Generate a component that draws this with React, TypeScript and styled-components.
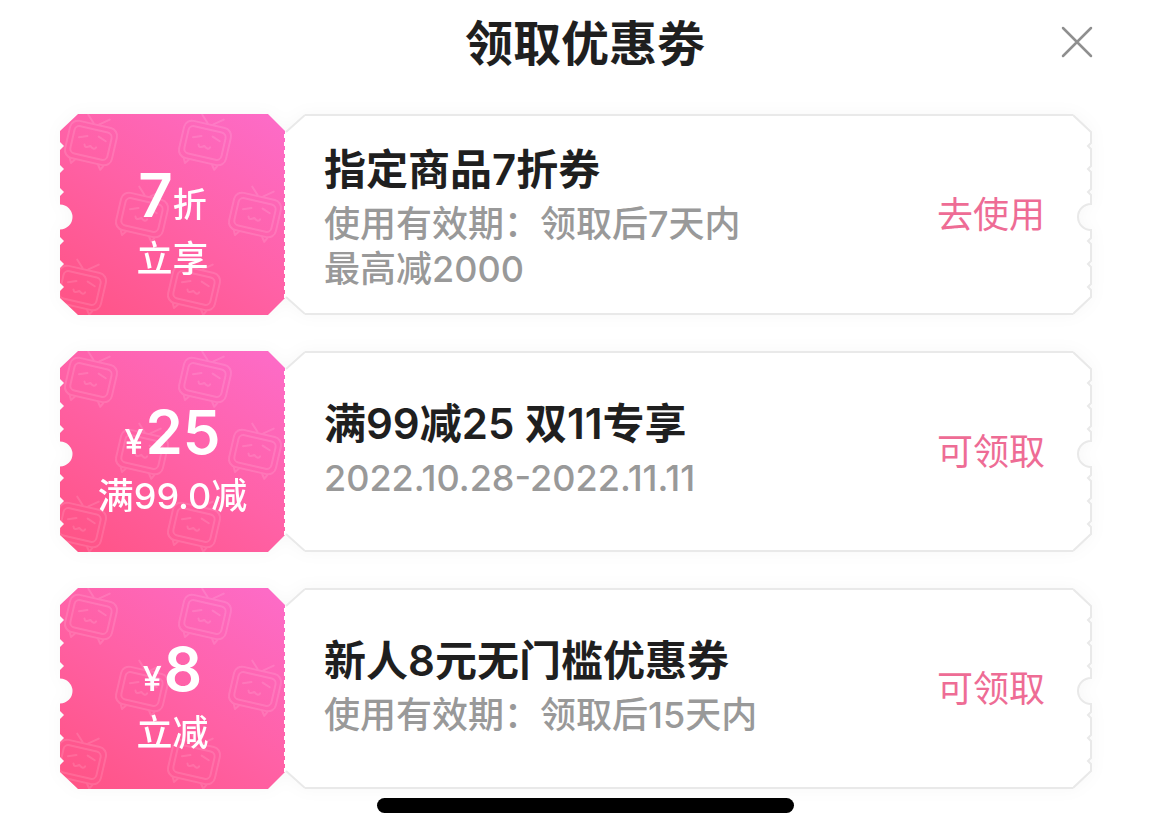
import React from "react";
import styled, { createGlobalStyle } from "styled-components";

const GlobalStyle = createGlobalStyle`
  *, *::before, *::after { box-sizing: border-box; }
  body {
    margin: 0;
    background: #fff;
    color: #1f1f1f;
    font-family: Inter, "Noto Sans CJK SC", sans-serif;
  }
`;

const Sheet = styled.main`
  display: flex;
  flex-direction: column;
  padding: 0 60px 24px;
`;

const Header = styled.header`
  display: grid;
  grid-template-columns: 1fr auto 1fr;
  align-items: center;
  height: 84px;
  margin-bottom: 30px;
`;

const SheetTitle = styled.h1`
  grid-column: 2;
  margin: 0;
  padding-top: 4px;
  font-size: 48px;
  line-height: 64px;
  font-weight: 600;
`;

const CloseButton = styled.button`
  justify-self: end;
  display: flex;
  padding: 8px;
  margin-right: 8px;
  border: 0;
  background: none;
  color: #8f8f8f;
  cursor: pointer;
`;

const CouponList = styled.ul`
  display: flex;
  flex-direction: column;
  gap: 36px;
  margin: 0;
  padding: 0;
  list-style: none;
`;

const Coupon = styled.li`
  display: flex;
  height: 201px;
  margin-right: 17px;
  filter: drop-shadow(0 0 8px rgba(0, 0, 0, 0.03));
`;

const Stub = styled.div`
  display: grid;
  flex: none;
  width: 225px;
  color: #fff;
  text-align: center;

  & > * { grid-area: 1 / 1; }
`;

const StubText = styled.div`
  display: flex;
  flex-direction: column;
  padding-top: 45px;
`;

const Amount = styled.p`
  display: flex;
  justify-content: center;
  align-items: baseline;
  margin: 0;
  font-size: 34px;
  line-height: 72px;
  font-weight: 500;
`;

const Currency = styled.span`
  margin-right: 2px;
`;

const Figure = styled.strong`
  font-size: 60px;
  font-weight: 600;
`;

const Condition = styled.p`
  margin: 0;
  font-size: 36px;
  line-height: 36px;
  font-weight: 500;
`;

const Panel = styled.div`
  display: flex;
  flex: 1;
  min-width: 0;
`;

const Edge = styled.svg`
  flex: none;
  display: block;
`;

const PanelBody = styled.div`
  display: flex;
  flex: 1;
  align-items: center;
  justify-content: space-between;
  min-width: 0;
  padding: 0 28px 0 19px;
  background: #fff;
  border: solid #e9e9e9;
  border-width: 2px 0;
`;

const Name = styled.h2`
  margin: 0;
  font-size: 42px;
  line-height: 64px;
  font-weight: 600;
`;

const Details = styled.div`
  min-height: 56px;
`;

const Detail = styled.p`
  margin: 0;
  color: #999;
  font-size: 36px;
  line-height: 45px;
  font-weight: 500;
`;

const ActionButton = styled.button`
  flex: none;
  padding: 0;
  border: 0;
  background: none;
  color: #ee6c95;
  font: 400 36px/52px Inter, "Noto Sans CJK SC", sans-serif;
  cursor: pointer;
`;

const HomeBar = styled.div`
  align-self: center;
  width: 40%;
  max-width: 417px;
  height: 15px;
  margin-top: 9px;
  border-radius: 8px;
  background: #000;
`;

const tvSpots = [
  [31, 29],
  [145, 29],
  [82, 101],
  [195, 101],
  [20, 174],
  [134, 174],
];

function StubArt({ id }: { id: string }) {
  return (
    <svg width="225" height="201" viewBox="0 0 225 201" aria-hidden="true">
      <defs>
        <linearGradient id={`fill-${id}`} x1="0.1" y1="1" x2="0.9" y2="0">
          <stop offset="0" stopColor="#ff5487" />
          <stop offset="0.5" stopColor="#ff61a6" />
          <stop offset="1" stopColor="#fd6bc6" />
        </linearGradient>
        <clipPath id={`clip-${id}`}>
          <path d="M18 0H208L225 17V184L208 201H18L0 184V177L4 173L0 169V154L4 150L0 146V131L4 127L0 123V115.500A12.500 12.500 0 0 0 0 90.500V82L4 78L0 74V59L4 55L0 51V36L4 32L0 28V17Z" />
        </clipPath>
      </defs>
      <g clipPath={`url(#clip-${id})`}>
        <rect width="225" height="201" fill={`url(#fill-${id})`} />
        {tvSpots.map(([x, y]) => (
          <g
            key={`${x}-${y}`}
            transform={`translate(${x} ${y}) rotate(13)`}
            fill="none"
            stroke="#fff"
            strokeWidth="2"
            strokeLinecap="round"
            strokeLinejoin="round"
            opacity="0.12"
          >
            <rect x="-24" y="-19" width="48" height="38" rx="8" />
            <rect x="-19" y="-14" width="38" height="28" rx="5" />
            <path d="M-9 -27L-2 -20M13 -27L4 -20" />
            <path d="M-13 -3L-5 -6M6 -8L14 -5M-6 3Q-5 7 0 3Q5 7 6 3" />
            <path d="M-17 20L-15 24L-12 20M12 20L15 24L17 20" />
          </g>
        ))}
        <path d="M224.500 20V184" stroke="#fff" strokeWidth="1" strokeDasharray="4 4" />
      </g>
    </svg>
  );
}

function LeftEdge() {
  return (
    <Edge width="20" height="201" viewBox="0 0 20 201" aria-hidden="true">
      <path d="M20 1L0 19V182L20 200" fill="#fff" />
      <path d="M20 1L1 18M1 183L20 200" fill="none" stroke="#e9e9e9" strokeWidth="2" />
    </Edge>
  );
}

function RightEdge() {
  return (
    <Edge width="20" height="201" viewBox="0 0 20 201" aria-hidden="true">
      <path
        d="M0 1L18 18V29L15 32L18 35V52L15 55L18 58V75L15 78L18 81V90A13 13 0 0 0 18 116V124L15 127L18 130V147L15 150L18 153V170L15 173L18 176V183L0 200"
        fill="#fff"
        stroke="#e9e9e9"
        strokeWidth="2"
      />
    </Edge>
  );
}

interface CouponData {
  id: string;
  currency?: string;
  figure: string;
  unit?: string;
  condition: string;
  name: string;
  details: string[];
  action: string;
}

const coupons: CouponData[] = [
  {
    id: "discount",
    figure: "7",
    unit: "折",
    condition: "立享",
    name: "指定商品7折券",
    details: ["使用有效期：领取后7天内", "最高减2000"],
    action: "去使用",
  },
  {
    id: "double11",
    currency: "¥",
    figure: "25",
    condition: "满99.0减",
    name: "满99减25 双11专享",
    details: ["2022.10.28-2022.11.11"],
    action: "可领取",
  },
  {
    id: "newcomer",
    currency: "¥",
    figure: "8",
    condition: "立减",
    name: "新人8元无门槛优惠券",
    details: ["使用有效期：领取后15天内"],
    action: "可领取",
  },
];

export default function App() {
  return (
    <>
      <GlobalStyle />
      <Sheet>
        <Header>
          <SheetTitle>领取优惠劵</SheetTitle>
          <CloseButton type="button" aria-label="关闭">
            <svg width="34" height="34" viewBox="0 0 34 34" fill="none" stroke="currentColor" strokeWidth="2.500" strokeLinecap="round">
              <path d="M3 3L31 31M31 3L3 31" />
            </svg>
          </CloseButton>
        </Header>
        <CouponList>
          {coupons.map((c) => (
            <Coupon key={c.id}>
              <Stub>
                <StubArt id={c.id} />
                <StubText>
                  <Amount>
                    {c.currency && <Currency>{c.currency}</Currency>}
                    <Figure>{c.figure}</Figure>
                    {c.unit}
                  </Amount>
                  <Condition>{c.condition}</Condition>
                </StubText>
              </Stub>
              <Panel>
                <LeftEdge />
                <PanelBody>
                  <div>
                    <Name>{c.name}</Name>
                    <Details>
                      {c.details.map((d) => (
                        <Detail key={d}>{d}</Detail>
                      ))}
                    </Details>
                  </div>
                  <ActionButton type="button">{c.action}</ActionButton>
                </PanelBody>
                <RightEdge />
              </Panel>
            </Coupon>
          ))}
        </CouponList>
        <HomeBar />
      </Sheet>
    </>
  );
}
